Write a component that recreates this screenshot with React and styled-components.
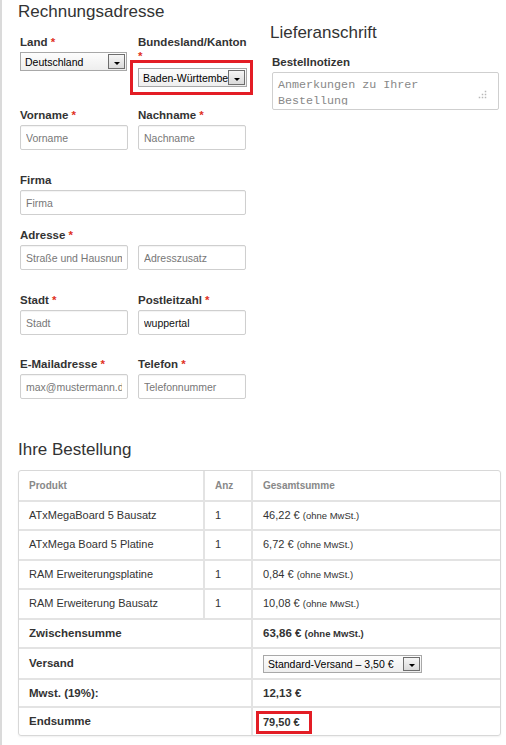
import React from 'react'
import styled, { createGlobalStyle } from 'styled-components'

const items = [
  { name: 'ATxMegaBoard 5 Bausatz', qty: 1, price: '46,22 €' },
  { name: 'ATxMega Board 5 Platine', qty: 1, price: '6,72 €' },
  { name: 'RAM Erweiterungsplatine', qty: 1, price: '0,84 €' },
  { name: 'RAM Erweiterung Bausatz', qty: 1, price: '10,08 €' },
]

export default function App() {
  return (
    <Page>
      <GlobalStyle />
      <TopGrid>
        <Column>
          <Heading $top={2}>Rechnungsadresse</Heading>
          <FieldRow $top={13}>
            <Field>
              <Label>Land <Req>*</Req></Label>
              <Select $w={107}>
                <SelectText>Deutschland</SelectText>
                <ArrowBtn />
              </Select>
            </Field>
            <Field>
              <Label>Bundesland/Kanton <Req>*</Req></Label>
              <Marker>
                <Select $w={109}>
                  <SelectText>Baden-Württemberg</SelectText>
                  <ArrowBtn />
                </Select>
              </Marker>
            </Field>
          </FieldRow>
          <FieldRow $top={13}>
            <Field>
              <Label>Vorname <Req>*</Req></Label>
              <Input placeholder="Vorname" />
            </Field>
            <Field>
              <Label>Nachname <Req>*</Req></Label>
              <Input placeholder="Nachname" />
            </Field>
          </FieldRow>
          <FieldRow $top={23} $single>
            <Field>
              <Label>Firma</Label>
              <Input placeholder="Firma" />
            </Field>
          </FieldRow>
          <FieldRow $top={13}>
            <Field>
              <Label>Adresse <Req>*</Req></Label>
              <Input placeholder="Straße und Hausnummer" />
            </Field>
            <Field>
              <Label>&nbsp;</Label>
              <Input placeholder="Adresszusatz" />
            </Field>
          </FieldRow>
          <FieldRow $top={23}>
            <Field>
              <Label>Stadt <Req>*</Req></Label>
              <Input placeholder="Stadt" />
            </Field>
            <Field>
              <Label>Postleitzahl <Req>*</Req></Label>
              <Input defaultValue="wuppertal" />
            </Field>
          </FieldRow>
          <FieldRow $top={22}>
            <Field>
              <Label>E-Mailadresse <Req>*</Req></Label>
              <Input placeholder="max@mustermann.de" />
            </Field>
            <Field>
              <Label>Telefon <Req>*</Req></Label>
              <Input placeholder="Telefonnummer" />
            </Field>
          </FieldRow>
        </Column>
        <Column>
          <Heading $top={23}>Lieferanschrift</Heading>
          <FieldRow $top={12} $single>
            <Field>
              <Label>Bestellnotizen</Label>
              <NotesBox>
                <NotesText>Anmerkungen zu Ihrer Bestellung</NotesText>
                <Grip width="9" height="9" viewBox="0 0 9 9">
                  {[[7.5, 1.5], [4.5, 4.5], [7.5, 4.5], [1.5, 7.5], [4.5, 7.5], [7.5, 7.5]].map(([x, y]) => (
                    <rect key={`${x}-${y}`} x={x - 0.75} y={y - 0.75} width="1.5" height="1.5" fill="#b8b8b8" />
                  ))}
                </Grip>
              </NotesBox>
            </Field>
          </FieldRow>
        </Column>
      </TopGrid>

      <Heading $top={41}>Ihre Bestellung</Heading>
      <OrderTable>
        <thead>
          <Tr $h={29}>
            <Th $w={186}>Produkt</Th>
            <Th $w={48}>Anz</Th>
            <Th>Gesamtsumme</Th>
          </Tr>
        </thead>
        <tbody>
          {items.map(item => (
            <Tr $h={27.4} key={item.name}>
              <Td>{item.name}</Td>
              <Td>{item.qty}</Td>
              <Td>{item.price} <Small>(ohne MwSt.)</Small></Td>
            </Tr>
          ))}
          <Tr $h={27} $bold>
            <Td colSpan={2}>Zwischensumme</Td>
            <Td>63,86 € <Small>(ohne MwSt.)</Small></Td>
          </Tr>
          <Tr $h={29} $bold>
            <Td colSpan={2}>Versand</Td>
            <Td>
              <Select $w={159} $h={18} $inline>
                <SelectText>Standard-Versand – 3,50 €</SelectText>
                <ArrowBtn />
              </Select>
            </Td>
          </Tr>
          <Tr $h={26.5} $bold>
            <Td colSpan={2}>Mwst. (19%):</Td>
            <Td>12,13 €</Td>
          </Tr>
          <Tr $h={26.5} $bold>
            <Td colSpan={2}>Endsumme</Td>
            <Td><TotalMark>79,50 €</TotalMark></Td>
          </Tr>
        </tbody>
      </OrderTable>
    </Page>
  )
}

const GlobalStyle = createGlobalStyle`
  html, body {
    margin: 0;
    padding: 0;
    background: #fff;
  }
  body {
    font-family: "Liberation Sans", Arial, sans-serif;
    color: #333;
  }
  * {
    box-sizing: border-box;
  }
`

const Page = styled.div`
  min-height: 745px;
  border-left: 2px solid #dadada;
  padding-left: 18px;
  overflow: hidden;
`
const TopGrid = styled.div`
  display: grid;
  grid-template-columns: 226px 227px;
  column-gap: 26px;
  align-items: start;
`
const Column = styled.div`
  display: flex;
  flex-direction: column;
`
const Heading = styled.h3`
  margin: ${props => props.$top}px 0 0 -2px;
  font-size: 17px;
  line-height: 20px;
  font-weight: normal;
  color: #333;
`
const FieldRow = styled.div`
  display: grid;
  grid-template-columns: ${props => props.$single ? '1fr' : '108px 108px'};
  column-gap: 10px;
  align-items: start;
  margin-top: ${props => props.$top}px;
`
const Field = styled.div`
  display: flex;
  flex-direction: column;
`
const Label = styled.label`
  font-size: 11.5px;
  line-height: 14px;
  font-weight: bold;
  color: #333;
  margin-bottom: 3px;
`
const Req = styled.span`
  color: #e0301e;
`
const Input = styled.input`
  width: 100%;
  height: 25px;
  padding: 0 5px;
  border: 1px solid #cfcfcf;
  border-radius: 2px;
  box-shadow: inset 0 1px 1px rgba(0, 0, 0, 0.05);
  background: #fff;
  font-family: "Liberation Sans", Arial, sans-serif;
  font-size: 10.5px;
  color: #111;
  outline: none;

  &::placeholder {
    color: #777;
  }
`
const Select = styled.div`
  display: ${props => props.$inline ? 'inline-flex' : 'flex'};
  align-items: center;
  width: ${props => props.$w}px;
  height: ${props => props.$h || 19}px;
  padding-left: 4px;
  border: 1px solid #a8a8a8;
  background: linear-gradient(#fdfdfd, #eeeeee);
  font-size: 10.5px;
  font-weight: normal;
  color: #000;
  vertical-align: middle;
  line-height: normal;
`
const SelectText = styled.span`
  flex: 1;
  min-width: 0;
  white-space: nowrap;
  overflow: hidden;
`
const ArrowBtn = styled.span`
  flex: none;
  display: flex;
  align-items: center;
  justify-content: center;
  width: 17px;
  height: calc(100% - 2px);
  margin-right: 1px;
  padding-top: 3px;
  border: 1px solid #6e6e6e;
  background: linear-gradient(#f6f6f6, #dadada);

  &::after {
    content: '';
    border-left: 3px solid transparent;
    border-right: 3px solid transparent;
    border-top: 3px solid #000;
  }
`
const Marker = styled.div`
  margin: -6px -7px 0 -8px;
  padding: 5px 3px 5px 5px;
  border: 3px solid #e31d25;
`
const NotesBox = styled.div`
  position: relative;
  height: 38px;
  border: 1px solid #cfcfcf;
  border-radius: 2px;
  background: #fff;
`
const NotesText = styled.div`
  height: 32px;
  padding: 4px 5px 0;
  overflow: hidden;
  font-family: "Liberation Mono", "Courier New", monospace;
  font-size: 11.7px;
  line-height: 16px;
  color: #888;
`
const Grip = styled.svg`
  position: absolute;
  right: 11px;
  bottom: 10px;
`
const OrderTable = styled.table`
  width: 483px;
  margin: 10px 0 0 -2px;
  table-layout: fixed;
  border-collapse: separate;
  border-spacing: 0;
  border: 1px solid #d8d8d8;
  border-radius: 3px;
  box-shadow: 0 1px 2px rgba(0, 0, 0, 0.06);
`
const Tr = styled.tr`
  line-height: ${props => props.$h}px;
  font-weight: ${props => props.$bold ? 'bold' : 'normal'};
  font-size: ${props => props.$bold ? '11.5px' : '11px'};

  &:last-child td {
    border-bottom: none;
  }
`
const Th = styled.th`
  width: ${props => props.$w ? `${props.$w}px` : 'auto'};
  padding: 0 10px;
  border-right: 2px solid #e3e3e3;
  border-bottom: 2px solid #e3e3e3;
  text-align: left;
  font-size: 10px;
  font-weight: bold;
  color: #888;

  &:last-child {
    border-right: none;
  }
`
const Td = styled.td`
  padding: 0 10px;
  border-right: 2px solid #e3e3e3;
  border-bottom: 2px solid #e3e3e3;
  color: #333;
  white-space: nowrap;
  vertical-align: middle;

  &:last-child {
    border-right: none;
  }
`
const Small = styled.small`
  font-size: 9.5px;
`
const TotalMark = styled.span`
  display: inline-block;
  margin-left: -7px;
  padding: 0 9px 0 4px;
  line-height: 17px;
  font-size: 11px;
  border: 3px solid #e31d25;
  vertical-align: middle;
`
